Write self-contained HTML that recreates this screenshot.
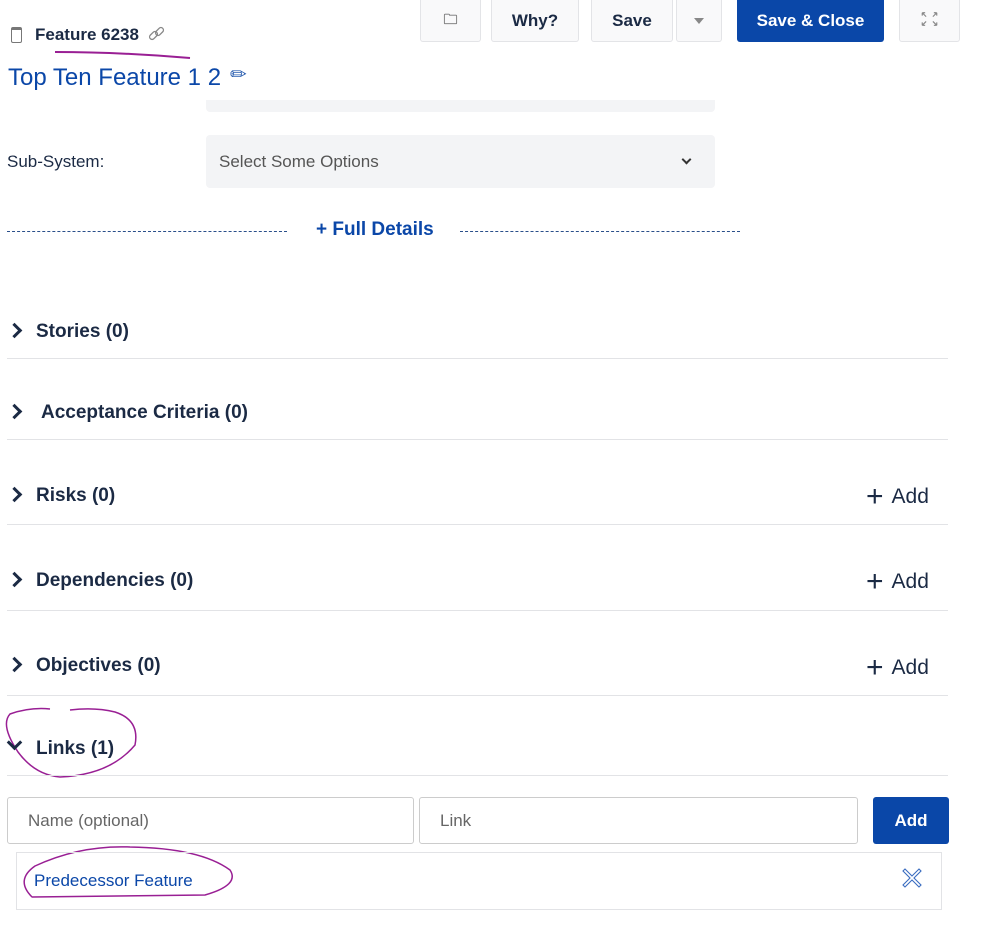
<!DOCTYPE html>
<html><head><meta charset="utf-8"><style>
*{box-sizing:border-box;margin:0;padding:0}
body{width:999px;height:945px;background:#fff;font-family:"Liberation Sans",sans-serif;color:#1b2a44;position:relative;overflow:hidden}
.a{position:absolute}
.btn{position:absolute;top:0;height:42px;background:#f9f9fa;border:1px solid #e3e4e7;border-top:none;border-radius:0 0 3px 3px;font-size:16px;font-weight:bold;color:#1b2a44;display:flex;align-items:center;justify-content:center}
.sec{position:absolute;left:7px;width:941px;border-bottom:1px solid #e2e3e6}
.st{position:absolute;left:36px;font-size:19px;font-weight:bold;color:#1b2a44}
.chev{position:absolute;left:9px;width:11px;height:11px;border-right:3.5px solid #1b2a44;border-bottom:3.5px solid #1b2a44;transform:rotate(-45deg)}
.add{position:absolute;left:866px;font-size:21px;color:#1b2a44}
.add span{font-size:30px;font-weight:300;vertical-align:-3px;margin-right:8px}
.inp{position:absolute;top:797px;height:47px;border:1px solid #ccc;border-radius:3px;font-size:17px;color:#666;padding:13px 20px}
</style></head><body>
<div class="a" style="left:11px;top:27px;width:11px;height:16px;border:1.5px solid #777;border-radius:2px;border-top-width:3px"></div>
<div class="a" style="left:35px;top:25px;font-size:17px;font-weight:bold">Feature 6238</div>
<svg class="a" style="left:148px;top:26px" width="18" height="16"><g stroke="#888" stroke-width="1.3" fill="none"><rect x="1" y="7" width="9" height="5" rx="2.5" transform="rotate(-45 5.5 9.5)"/><rect x="7" y="3" width="9" height="5" rx="2.5" transform="rotate(-45 11.5 5.5)"/></g></svg>
<svg class="a" style="left:0;top:0" width="999" height="945"><path d="M55 52 Q120 52 190 58" stroke="#991f94" stroke-width="2" fill="none"/>
<path d="M50 709 Q30 707 10 714 Q0 725 18 752 Q35 775 60 777 Q110 775 135 745 Q140 720 115 712 Q95 707 70 710" stroke="#991f94" stroke-width="1.5" fill="none"/>
<path d="M32 897 Q15 880 35 866 Q80 845 130 847 Q200 848 230 870 Q240 885 205 895 L32 897" stroke="#991f94" stroke-width="1.5" fill="none"/></svg>
<div class="a" style="left:8px;top:64px;font-size:24px;color:#0b47a8">Top Ten Feature 1 2</div>
<div class="a" style="left:230px;top:62px;font-size:20px;color:#2c5fb0">✏</div>
<div class="btn" style="left:420px;width:61px;color:#777;font-size:14px">🗀</div>
<div class="btn" style="left:491px;width:88px;font-size:17px">Why?</div>
<div class="btn" style="left:591px;width:82px;font-size:17px">Save</div>
<div class="btn" style="left:676px;width:46px"><div style="border:5px solid transparent;border-top:6px solid #888;margin-top:5px"></div></div>
<div class="btn" style="left:737px;width:147px;background:#0a47a8;border-color:#0a47a8;color:#fff;font-size:17px">Save &amp; Close</div>
<svg class="btn" style="left:899px;width:61px" viewBox="0 0 61 42"><g stroke="#888" stroke-width="1.2" fill="none"><path d="M23 13l4 4M23 13h3M23 13v3M38 13l-4 4M38 13h-3M38 13v3M23 26l4-4M23 26h3M23 26v-3M38 26l-4-4M38 26h-3M38 26v-3"/></g></svg>
<div class="a" style="left:206px;top:100px;width:509px;height:12px;background:#f3f4f6;border-radius:0 0 4px 4px"></div>
<div class="a" style="left:7px;top:152px;font-size:17px">Sub-System:</div>
<div class="a" style="left:206px;top:135px;width:509px;height:53px;background:#f3f4f6;border-radius:4px;font-size:17px;color:#555;padding:17px 13px">Select Some Options</div>
<div class="a" style="left:683px;top:156px;width:7px;height:7px;border-right:2px solid #333;border-bottom:2px solid #333;transform:rotate(45deg)"></div>
<div class="a" style="left:7px;top:231px;width:280px;border-top:1px dashed #2a4f8a"></div>
<div class="a" style="left:460px;top:231px;width:280px;border-top:1px dashed #2a4f8a"></div>
<div class="a" style="left:316px;top:219px;font-size:19px;font-weight:bold;color:#0b47a8">+ Full Details</div>

<div class="sec" style="top:310px;height:49px"></div><div class="chev" style="top:325px"></div><div class="st" style="top:321px">Stories (0)</div>
<div class="sec" style="top:390px;height:50px"></div><div class="chev" style="top:406px"></div><div class="st" style="left:41px;top:402px">Acceptance Criteria (0)</div>
<div class="sec" style="top:470px;height:55px"></div><div class="chev" style="top:489px"></div><div class="st" style="top:485px">Risks (0)</div><div class="add" style="top:480px"><span>+</span>Add</div>
<div class="sec" style="top:560px;height:51px"></div><div class="chev" style="top:574px"></div><div class="st" style="top:570px">Dependencies (0)</div><div class="add" style="top:565px"><span>+</span>Add</div>
<div class="sec" style="top:640px;height:56px"></div><div class="chev" style="top:659px"></div><div class="st" style="top:655px">Objectives (0)</div><div class="add" style="top:651px"><span>+</span>Add</div>
<div class="sec" style="top:730px;height:46px"></div><div class="chev" style="top:737px;left:9px;transform:rotate(45deg)"></div><div class="st" style="top:738px">Links (1)</div>

<div class="inp" style="left:7px;width:407px">Name (optional)</div>
<div class="inp" style="left:419px;width:439px">Link</div>
<div class="a" style="left:873px;top:797px;width:76px;height:47px;background:#0a47a8;border-radius:3px;color:#fff;font-size:17px;font-weight:bold;text-align:center;line-height:47px">Add</div>
<div class="a" style="left:16px;top:852px;width:926px;height:58px;border:1px solid #e2e3e6"></div>
<div class="a" style="left:34px;top:871px;font-size:17px;color:#0b47a8">Predecessor Feature</div>
<svg class="a" style="left:902px;top:868px" width="20" height="20"><path d="M3 1L10 8L17 1L19 3L12 10L19 17L17 19L10 12L3 19L1 17L8 10L1 3Z" fill="none" stroke="#3a6cc0" stroke-width="1.1"/></svg>
</body></html>
